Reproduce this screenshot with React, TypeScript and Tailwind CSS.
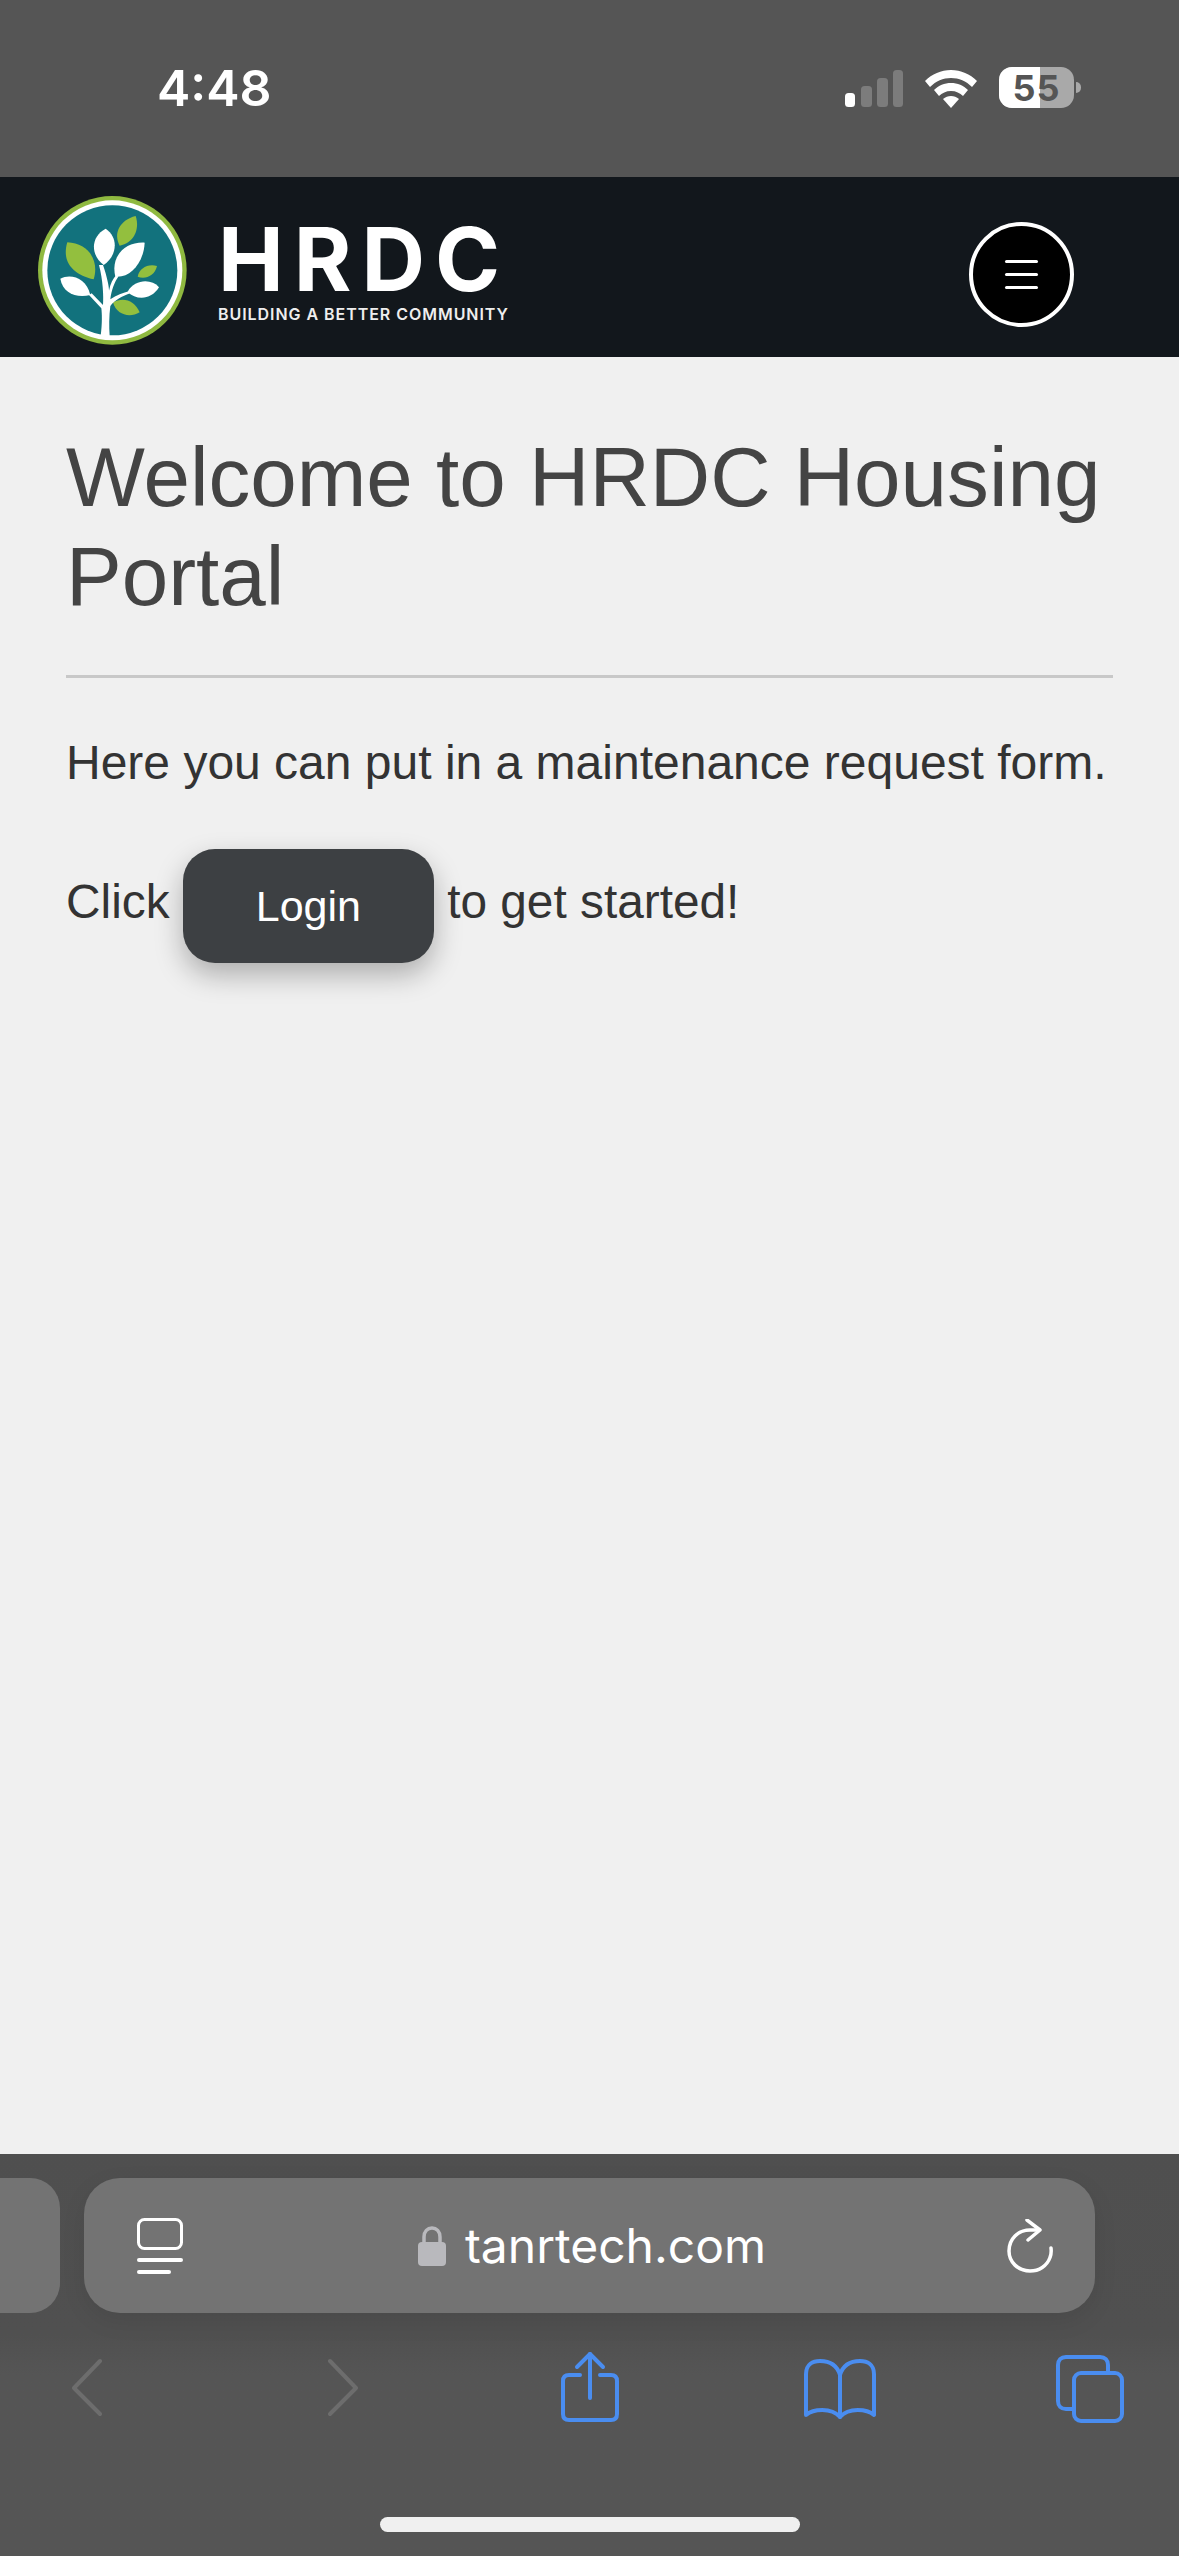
export default function App() {
  return (
    <div className="w-[1179px] h-[2556px] flex flex-col overflow-hidden bg-[#f0f0f0]" style={{ fontFamily: '"Liberation Sans", Arial, sans-serif' }}>
      <StatusBar />
      <Header />
      <main className="flex-1 px-[66px] pt-[71px]">
        <h1 className="text-[83.6px] leading-[99px] font-normal text-[#444444] m-0">Welcome to HRDC Housing Portal</h1>
        <div className="h-[3px] w-[1047px] bg-[#c8c8c8] mt-[49px]" />
        <p className="text-[48px] leading-[64px] text-[#333333] mt-[53px]">Here you can put in a maintenance request form.</p>
        <p className="text-[47.8px] leading-[64px] text-[#333333] mt-[54px]">
          Click{' '}
          <button className="inline-block align-[-3px] w-[251px] h-[114px] rounded-[32px] bg-[#3d4043] text-white text-[43px] shadow-[0_12px_28px_rgba(0,0,0,0.28)]">Login</button>{' '}
          to get started!
        </p>
      </main>
      <BottomBar />
    </div>
  );
}

function StatusBar() {
  return (
    <div className="h-[177px] shrink-0 bg-[#555555] flex items-start text-white">
      <span className="ml-[157px] mt-[58px] text-[50px] leading-[60px] font-semibold" style={{ fontFamily: 'Inter, sans-serif' }}>4:48</span>
      <div className="ml-auto mr-[98px] mt-[67px] flex items-center">
        <svg width="60" height="38" viewBox="0 0 60 38" className="mt-[2px]">
          <rect x="0" y="23" width="10" height="14" rx="3.5" fill="#ffffff" />
          <rect x="16" y="16" width="11" height="21" rx="3.5" fill="#7c7c7c" />
          <rect x="32" y="8" width="11" height="29" rx="3.5" fill="#7c7c7c" />
          <rect x="48" y="0" width="10" height="37" rx="3.5" fill="#7c7c7c" />
        </svg>
        <svg width="52" height="38" viewBox="0 0 52 38" className="ml-[20px] mt-[2px]">
          <path d="M26 0 C 16 0 7 4 0 11 L5 17 C 11 11 18 8 26 8 C 34 8 41 11 47 17 L52 11 C 45 4 36 0 26 0 Z" fill="#fff" />
          <path d="M26 13 C 19.5 13 13.5 15.5 9 20 L14 26 C 17 23 21 21 26 21 C 31 21 35 23 38 26 L43 20 C 38.5 15.5 32.500 13 26 13 Z" fill="#fff" />
          <path d="M26 26 C 23 26 20.500 27 18 29 L26 38 L34 29 C 31.500 27 29 26 26 26 Z" fill="#fff" />
        </svg>
        <div className="relative ml-[22px] w-[75px] h-[41px] rounded-[13px] overflow-hidden bg-[#a9a9a9]">
          <div className="h-full w-[41px] bg-white" />
          <span className="absolute inset-0 flex items-center justify-center text-[36px] font-bold text-[#555555] tracking-[1px]" style={{ fontFamily: 'Inter, sans-serif' }}>55</span>
        </div>
        <div className="ml-[2px] w-[5px] h-[11px] rounded-r-[5px] bg-[#a9a9a9]" />
      </div>
    </div>
  );
}

function Logo() {
  return (
    <svg width="149" height="149" viewBox="55 48 447 447" className="shrink-0">
      <circle cx="278" cy="271" r="223" fill="#8fb940" />
      <circle cx="278" cy="271" r="210" fill="#ffffff" />
      <circle cx="278" cy="271" r="195" fill="#12727d" />
      <path d="M143 187 C205 190 240 240 222 298 C160 285 125 245 143 187Z" fill="#93bf3e" />
      <path d="M348 108 C362 150 340 190 300 197 C280 160 300 120 348 108Z" fill="#93bf3e" />
      <path d="M412 258 C405 290 375 298 354 290 C358 265 385 250 412 258Z" fill="#93bf3e" />
      <path d="M360 397 C330 415 290 405 280 367 C310 350 345 360 360 397Z" fill="#93bf3e" />
      <path d="M258 146 C300 175 290 230 252 255 C212 225 212 170 258 146Z" fill="#fff" />
      <path d="M375 188 C372 250 330 295 287 290 C272 230 315 185 375 188Z" fill="#fff" />
      <path d="M418 322 C395 360 350 362 324 335 C345 298 395 295 418 322Z" fill="#fff" />
      <path d="M122 296 C155 280 200 295 212 345 C170 355 130 340 122 296Z" fill="#fff" />
      <path d="M243 468 C248 430 247 400 245 385 L208 345 L216 340 L250 375 C252 350 250 300 238 255 L250 255 C262 290 268 320 268 332 C272 312 280 295 290 285 L296 290 C285 305 275 330 272 358 C290 345 310 338 330 333 L332 340 C310 348 285 360 272 378 C268 410 268 440 270 468Z" fill="#fff" />
    </svg>
  );
}

function Header() {
  return (
    <header className="h-[180px] shrink-0 bg-[#12171c] flex items-center pl-[38px] pr-[105px]">
      <div className="mt-[7px]"><Logo /></div>
      <div className="ml-[31px] flex flex-col mt-[12px]" style={{ fontFamily: 'Inter, sans-serif' }}>
        <span className="text-[88px] leading-[64px] font-bold text-white tracking-[10px]">HRDC</span>
        <span className="text-[16px] leading-[12px] font-semibold text-[#eeeeee] tracking-[0.95px] mt-[17px] whitespace-nowrap">BUILDING A BETTER COMMUNITY</span>
      </div>
      <button className="ml-auto mt-[15px] w-[105px] h-[105px] rounded-full bg-black border-[4px] border-white flex flex-col items-center justify-center gap-[10px]">
        <span className="block w-[33px] h-[3px] rounded-full bg-white" />
        <span className="block w-[33px] h-[3px] rounded-full bg-white" />
        <span className="block w-[33px] h-[3px] rounded-full bg-white" />
      </button>
    </header>
  );
}

function BottomBar() {
  return (
    <div className="h-[402px] shrink-0 flex flex-col bg-gradient-to-b from-[#4f4f4f] via-[#505050] via-[45%] to-[#555555] to-[55%]">
      <div className="flex pt-[24px] gap-[24px]">
        <div className="w-[60px] h-[135px] rounded-r-[30px] bg-[#737373]" />
        <div className="w-[1011px] h-[135px] rounded-[36px] bg-[#737373] flex items-center pl-[53px] pr-[42px] shadow-[0_8px_24px_rgba(0,0,0,0.08)]">
          <svg width="46" height="56" viewBox="0 0 46 56" fill="none" stroke="#fff" strokeLinecap="round" className="shrink-0">
            <rect x="1.500" y="1.500" width="43" height="29" rx="6" strokeWidth="3" />
            <path d="M2 42H44" strokeWidth="4" />
            <path d="M2 54H32" strokeWidth="4" />
          </svg>
          <div className="flex-1 flex items-center justify-center pr-[6px]">
            <svg width="28" height="40" viewBox="0 0 28 40" className="shrink-0 mt-[1px]">
              <path d="M6 17V11C6 5.500 9.500 2 14 2C18.500 2 22 5.500 22 11V17" fill="none" stroke="#b9b9bd" strokeWidth="3.500" />
              <rect x="0" y="16" width="28" height="24" rx="4" fill="#b9b9bd" />
            </svg>
            <span className="ml-[19px] text-[48px] leading-[60px] text-white" style={{ fontFamily: 'Inter, sans-serif' }}>tanrtech.com</span>
          </div>
          <svg width="46" height="54" viewBox="0 0 46 54" fill="none" stroke="#fff" strokeWidth="3.500" strokeLinecap="round" strokeLinejoin="round" className="shrink-0">
            <path d="M44 29C44.500 33 44 36 43 38.500C40 47 32 52 23 52C11 52 2 43 2 32C2 20 11 11 23 11H32" />
            <path d="M20 1L33 11L21 21" />
          </svg>
        </div>
      </div>
      <div className="flex items-start pl-[72px] mt-[38px] h-[72px]">
        <svg width="30" height="72" viewBox="0 0 30 72" fill="none" stroke="#6d6d6d" strokeWidth="4" strokeLinecap="round" strokeLinejoin="round" className="shrink-0">
          <path d="M28 10L2 37L28 63" />
        </svg>
        <svg width="30" height="72" viewBox="0 0 30 72" fill="none" stroke="#6d6d6d" strokeWidth="4" strokeLinecap="round" strokeLinejoin="round" className="shrink-0 ml-[226px]">
          <path d="M2 10L28 37L2 63" />
        </svg>
        <svg width="58" height="72" viewBox="0 0 58 72" fill="none" stroke="#4a8df0" strokeWidth="4" strokeLinecap="round" strokeLinejoin="round" className="shrink-0 ml-[203px]">
          <path d="M19 24H8C4 24 2 26 2 30V63C2 67 4 69 8 69H50C54 69 56 67 56 63V30C56 26 54 24 50 24H39" />
          <path d="M29 47V3" />
          <path d="M16 16L29 3L42 16" />
        </svg>
        <svg width="72" height="62" viewBox="0 0 72 62" fill="none" stroke="#4a8df0" strokeWidth="4" strokeLinecap="round" strokeLinejoin="round" className="shrink-0 ml-[185px] mt-[7px]">
          <path d="M36 17C33 7 25 3 16 3C9 3 2 6 2 16V57C9 51 27 49 36 59C45 49 63 51 70 57V16C70 6 63 3 56 3C47 3 39 7 36 17Z" />
          <path d="M36 17V59" />
        </svg>
        <svg width="68" height="68" viewBox="0 0 68 68" fill="none" stroke="#4a8df0" strokeWidth="4" strokeLinejoin="round" className="shrink-0 ml-[180px] mt-[4px]">
          <path d="M18 54H10C5 54 2 51 2 46V10C2 5 5 2 10 2H44C49 2 52 5 52 10V18" />
          <rect x="18" y="18" width="48" height="48" rx="7" />
        </svg>
      </div>
      <div className="mt-[94px] mx-auto w-[420px] h-[15px] rounded-full bg-[#f0f0f0]" />
    </div>
  );
}
